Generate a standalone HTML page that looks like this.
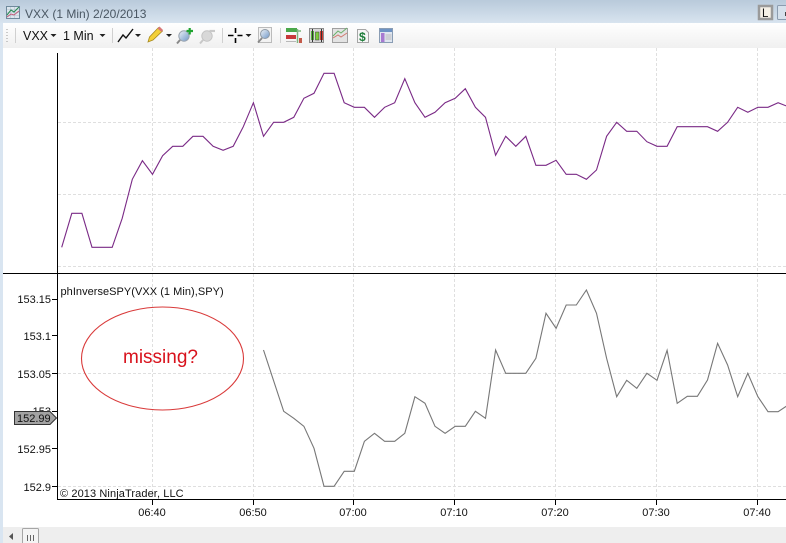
<!DOCTYPE html>
<html><head><meta charset="utf-8"><style>
html,body{margin:0;padding:0;background:#fff}
#r{position:relative;width:786px;height:543px;overflow:hidden;background:#fff}
svg{position:absolute;left:0;top:0}
text{font-family:"Liberation Sans",sans-serif}
</style></head><body><div id="r">
<svg width="786" height="543" viewBox="0 0 786 543" xmlns="http://www.w3.org/2000/svg">
<defs>
<linearGradient id="tb" x1="0" y1="0" x2="0" y2="1"><stop offset="0" stop-color="#b9cadb"/><stop offset="1" stop-color="#d8e4ef"/></linearGradient>
<linearGradient id="tl" x1="0" y1="0" x2="0" y2="1"><stop offset="0" stop-color="#ffffff"/><stop offset="1" stop-color="#f0f0f0"/></linearGradient>
<linearGradient id="mg" x1="0" y1="0" x2="1" y2="1"><stop offset="0" stop-color="#eef2f6"/><stop offset="1" stop-color="#6f97c8"/></linearGradient>
</defs>
<rect width="786" height="543" fill="#fff"/>
<rect x="0" y="0" width="786" height="23" fill="url(#tb)"/>
<rect x="0" y="23" width="3" height="520" fill="#d9e5f1"/>
<rect x="3" y="23" width="783" height="25" fill="url(#tl)"/>
<rect x="3" y="527" width="783" height="16" fill="#eeeeee"/>

<!-- title -->
<rect x="6.500" y="6.500" width="13" height="12" fill="#dde6ee" stroke="#6f8a9c"/>
<path d="M7 9.500h12M7 12.500h12M7 15.500h12M10.500 7v11M14.500 7v11" stroke="#b5c4d0" stroke-width=".6"/>
<path d="M7 15l4-5 3 2 5-5" fill="none" stroke="#2e8b57" stroke-width="1.100"/>
<path d="M7 17l4-3 3 1 5-4" fill="none" stroke="#c05a78" stroke-width="1"/>
<text x="25" y="18" font-size="12" fill="#4a5763">VXX (1 Min)</text>
<text x="93" y="18" font-size="12" fill="#4a5763">2/20/2013</text>
<rect x="759" y="6" width="13" height="13" fill="#f5f0e6" stroke="#9a9a9a" stroke-width="2.500"/>
<text x="762" y="17" font-size="11.500" fill="#111">L</text>
<rect x="777.500" y="5.500" width="14" height="14" rx="1" fill="#d6e1ec" stroke="#8b9cb0"/>
<rect x="785" y="12" width="2" height="4" fill="#444"/>

<!-- toolbar -->
<path d="M7 29v1M7 32v1M7 35v1M7 38v1M7 41v1" stroke="#9a9a9a" stroke-width="1"/>
<path d="M15.500 28v15M112.500 28v15M222.500 28v15M280.500 28v15" stroke="#d0d0d0" stroke-width="1"/>
<text x="23" y="40" font-size="12.500" fill="#111">VXX</text>
<path d="M50.500 34h6l-3 3z" fill="#222"/>
<text x="63" y="40" font-size="12.500" fill="#111">1 Min</text>
<path d="M99.500 34h6l-3 3z" fill="#222"/>
<path d="M118 42l5-7 3 3 7-9" fill="none" stroke="#111" stroke-width="1.400"/>
<path d="M135 34h6l-3 3z" fill="#222"/>
<path d="M148 42l1.500-5 9-9.500 4 3.500-9.500 9z" fill="#f3d038" stroke="#a88a1e" stroke-width=".8"/>
<path d="M157.500 28.500l4 3.500 1.500-2-3.500-3.500z" fill="#d87878"/>
<path d="M166 34h6l-3 3z" fill="#222"/>
<circle cx="184" cy="36" r="5.200" fill="url(#mg)" stroke="#9aa4ae"/>
<path d="M180 40l-3 3.500" stroke="#888" stroke-width="2"/>
<path d="M186.500 31h6.500M189.700 28v6.500" stroke="#1fa32f" stroke-width="2.200"/>
<circle cx="207" cy="36" r="5.200" fill="#d8d8d8" stroke="#c4c4c4"/>
<path d="M203 40l-3 3.500" stroke="#c8c8c8" stroke-width="2"/>
<path d="M209.500 31h5.500" stroke="#c9c9c9" stroke-width="2.200"/>
<path d="M228 35.500h5.500M237.500 35.500h5M235.500 28v5M235.500 38v5" stroke="#000" stroke-width="1.600" fill="none"/>
<path d="M245.500 34h6l-3 3z" fill="#222"/>
<rect x="258.500" y="27.500" width="13" height="15" fill="#f2f2f2" stroke="#bbb"/>
<circle cx="265" cy="34" r="4.500" fill="url(#mg)" stroke="#8f9ba6"/>
<path d="M262 38l-4 4.500" stroke="#888" stroke-width="1.800"/>

<!-- indicator icon -->
<rect x="286" y="28" width="11" height="4" fill="#4aa84a"/>
<rect x="297" y="30" width="4" height="2" fill="#9ac89a"/>
<rect x="286" y="35" width="10" height="4" fill="#c8383a"/>
<path d="M297.500 29v14" stroke="#7fb37f" stroke-width="1.500"/>
<rect x="299" y="38" width="3" height="5" fill="#c45a4a"/>
<rect x="286" y="41" width="10" height="1" fill="#b8b8b8"/>
<!-- candles icon -->
<rect x="309.500" y="28.500" width="14" height="14" fill="#d8d8d8" stroke="#8d8d8d"/>
<rect x="311" y="31" width="3" height="9" fill="#57b53c"/>
<path d="M312.500 29v13" stroke="#333"/>
<rect x="315.500" y="32" width="3.500" height="8" fill="#7ccc3c" stroke="#333" stroke-width=".5"/>
<rect x="320" y="31" width="3" height="9" fill="#d23d33"/>
<path d="M321.500 29v13" stroke="#333"/>
<!-- area icon -->
<rect x="332.500" y="28.500" width="15" height="14" fill="#e3e3e3" stroke="#a0a0a0"/>
<path d="M333 38l5-3 3 2 6-4" fill="none" stroke="#d07a70"/>
<path d="M333 36l5-5 3 2 6-5" fill="none" stroke="#6bb06b"/>
<!-- dollar -->
<path d="M357.500 29.500h8l3 3v10h-11z" fill="#f6f6f6" stroke="#a5a5a5"/>
<text x="359" y="41" font-size="12" font-weight="bold" fill="#1e7d3a">$</text>
<!-- table -->
<rect x="379.500" y="28.500" width="13" height="14" fill="#dfe6f0" stroke="#8a9db4"/>
<rect x="380" y="29" width="12" height="3" fill="#6d93c4"/>
<rect x="381" y="33" width="3.500" height="9" fill="#a77ad1"/>
<path d="M385.500 35h6M385.500 37h6M385.500 39h6" stroke="#bbb"/>

<!-- grid -->
<g stroke="#dfdfdf" stroke-width="1" stroke-dasharray="3 2" fill="none">
<path d="M152.500 48V273M253.500 48V273M353.500 48V273M454.500 48V273M555.500 48V273M656.500 48V273M757.500 48V273"/>
<path d="M152.500 274V499M253.500 274V499M353.500 274V499M454.500 274V499M555.500 274V499M656.500 274V499M757.500 274V499"/>
<path d="M58 122.500H786M58 194.500H786M58 266.500H786M58 373.500H786M58 486.500H786"/>
</g>

<!-- axes -->
<path d="M57.500 53V499.500H786M3 273.500H786" fill="none" stroke="#000" stroke-width="1"/>
<path d="M52 299.500h5M52 335.500h5M52 373.500h5M52 411.500h5M52 448.500h5M52 486.500h5" stroke="#000" stroke-width="1"/>
<path d="M152.500 500v5M253.500 500v5M353.500 500v5M454.500 500v5M555.500 500v5M656.500 500v5M757.500 500v5" stroke="#000" stroke-width="1"/>

<!-- purple -->
<polyline fill="none" stroke="#7a2a86" stroke-width="1.100" points="61.700,247.300 71.800,213.300 81.900,213.300 92,247.300 102.100,247.300 112.200,247.300 122.200,218.300 132.300,179.300 142.400,160.700 152.500,174.300 162.600,155.700 172.700,146.300 182.800,146.300 192.900,136.300 203,136.300 213.100,146.300 223.100,150.300 233.200,146.300 243.300,126.700 253.400,102.700 263.500,136.300 273.600,122.300 283.700,122.300 293.800,117.300 303.900,98.300 314,93.300 324,73.300 334.100,73.300 344.200,102.700 354.300,107.300 364.400,107.300 374.500,117.300 384.600,107.300 394.700,102.700 404.800,78.700 414.900,102.700 425,117.300 435,112.300 445.100,102.700 455.200,98.300 465.300,88.700 475.400,107.300 485.500,117.300 495.600,155.300 505.700,136.300 515.800,146.300 525.800,136.300 535.900,165.300 546,165.300 556.100,160.300 566.200,174.300 576.300,174.300 586.400,179.300 596.500,170 606.600,136.300 616.700,122.300 626.700,131.300 636.800,131.300 646.900,141.700 657,146.300 667.100,146.300 677.200,126.700 687.300,126.700 697.400,126.700 707.500,126.700 717.600,131.300 727.600,122.300 737.700,107.300 747.800,112.300 757.900,107.300 768,107.300 778.100,102.700 788.200,106.700"/>

<!-- gray -->
<polyline fill="none" stroke="#777777" stroke-width="1.100" points="263.500,350 273.600,380.700 283.700,411.300 293.800,418.300 303.900,426.300 314,448.300 324,486.300 334.100,486.300 344.200,471.300 354.300,471.300 364.400,441.300 374.500,433.300 384.600,441.300 394.700,441.300 404.800,433.300 414.900,396.700 425,403.300 435,426.300 445.100,433.300 455.200,426.300 465.300,426.300 475.400,411.300 485.500,418.300 495.600,350 505.700,373.300 515.800,373.300 525.800,373.300 535.900,358.300 546,313.300 556.100,328.300 566.200,305 576.300,305 586.400,290 596.500,313.300 606.600,358.300 616.700,396.700 626.700,380.300 636.800,388.300 646.900,373.300 657,380.300 667.100,350.300 677.200,403.300 687.300,396.300 697.400,396.300 707.500,380 717.600,343.300 727.600,365 737.700,396.700 747.800,373.300 757.900,396.700 768,411.700 778.100,411.700 788.200,405"/>

<!-- labels -->
<g font-size="11" fill="#111">
<text x="51" y="303" text-anchor="end">153.15</text>
<text x="51" y="340" text-anchor="end">153.1</text>
<text x="51" y="378" text-anchor="end">153.05</text>
<text x="51" y="415" text-anchor="end">153</text>
<text x="51" y="453" text-anchor="end">152.95</text>
<text x="51" y="491" text-anchor="end">152.9</text>
<text x="152" y="516" text-anchor="middle">06:40</text>
<text x="253" y="516" text-anchor="middle">06:50</text>
<text x="353" y="516" text-anchor="middle">07:00</text>
<text x="454" y="516" text-anchor="middle">07:10</text>
<text x="555" y="516" text-anchor="middle">07:20</text>
<text x="656" y="516" text-anchor="middle">07:30</text>
<text x="757" y="516" text-anchor="middle">07:40</text>
<text x="60.500" y="295" letter-spacing=".04">phInverseSPY(VXX (1 Min),SPY)</text>
<text x="60" y="497" letter-spacing=".1">© 2013 NinjaTrader, LLC</text>
</g>
<path d="M14.500 411.500H50L56.500 418L50 424.500H14.500z" fill="#a2a2a2" stroke="#333"/>
<text x="17" y="422" font-size="11" fill="#111">152.99</text>

<!-- annotation -->
<ellipse cx="162.500" cy="358.500" rx="81" ry="51.500" fill="none" stroke="#d93a3a" stroke-width="1.100"/>
<text x="123" y="363" font-size="19" fill="#d8121c">missing?</text>

<!-- scrollbar -->
<path d="M13 533v7l-4-3.500z" fill="#555"/>
<rect x="22.500" y="528.500" width="16" height="16" rx="1" fill="#f4f4f4" stroke="#a6a6a6"/>
<path d="M27.500 535v6M30.500 535v6M33.500 535v6" stroke="#666" stroke-width="1"/>
</svg>
</div></body></html>
